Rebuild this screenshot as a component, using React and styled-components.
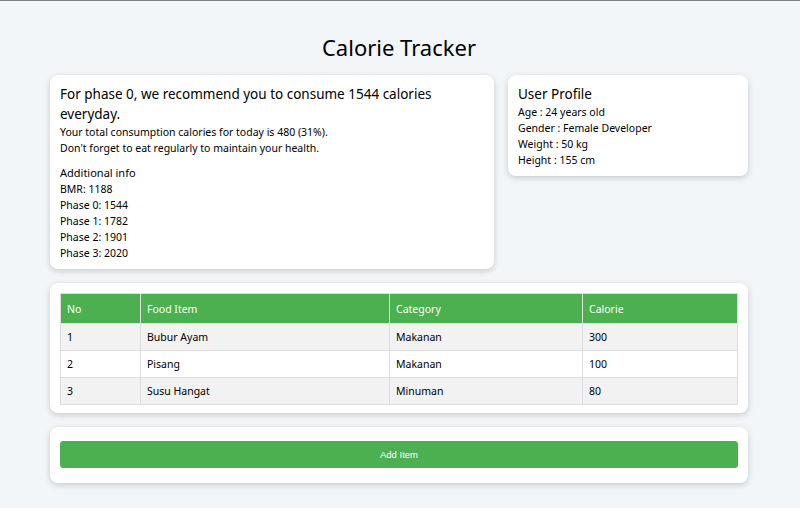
import React from "react";
import styled, { createGlobalStyle } from "styled-components";

const GlobalStyle = createGlobalStyle`
    html, body {
        margin: 0;
        padding: 0;
        background: #f3f6f9;
    }
    body {
        font-family: "Noto Sans", "Open Sans", sans-serif;
        color: #000;
        border-top: 1px solid #7d8186;
    }
`;

const foods = [
    { no: 1, name: "Bubur Ayam", category: "Makanan", calorie: 300 },
    { no: 2, name: "Pisang", category: "Makanan", calorie: 100 },
    { no: 3, name: "Susu Hangat", category: "Minuman", calorie: 80 },
];

const App = () => {
    return (
        <>
            <GlobalStyle />
            <Page>
                <Title>Calorie Tracker</Title>
                <TopRow>
                    <Card>
                        <Headline>For phase 0, we recommend you to consume 1544 calories everyday.</Headline>
                        <Line>Your total consumption calories for today is 480 (31%).</Line>
                        <Line>Don't forget to eat regularly to maintain your health.</Line>
                        <InfoBlock>
                            <InfoTitle>Additional info</InfoTitle>
                            <Line>BMR: 1188</Line>
                            <Line>Phase 0: 1544</Line>
                            <Line>Phase 1: 1782</Line>
                            <Line>Phase 2: 1901</Line>
                            <Line>Phase 3: 2020</Line>
                        </InfoBlock>
                    </Card>
                    <Card $side>
                        <Headline>User Profile</Headline>
                        <Line>Age : 24 years old</Line>
                        <Line>Gender : Female Developer</Line>
                        <Line>Weight : 50 kg</Line>
                        <Line>Height : 155 cm</Line>
                    </Card>
                </TopRow>
                <Card $pad="10px 10px 8px">
                    <Table>
                        <thead>
                            <tr>
                                <Th $w={80}>No</Th>
                                <Th $w={249}>Food Item</Th>
                                <Th $w={193}>Category</Th>
                                <Th>Calorie</Th>
                            </tr>
                        </thead>
                        <tbody>
                            {foods.map((f) => (
                                <Tr key={f.no} $odd={f.no % 2 === 1}>
                                    <Td>{f.no}</Td>
                                    <Td>{f.name}</Td>
                                    <Td>{f.category}</Td>
                                    <Td>{f.calorie}</Td>
                                </Tr>
                            ))}
                        </tbody>
                    </Table>
                </Card>
                <Card $pad="14px 10px 15px">
                    <AddButton>Add Item</AddButton>
                </Card>
            </Page>
        </>
    );
};

const Page = styled.main`
    width: 698px;
    margin: 0 auto;
    padding: 32px 2px 24px 0;
    display: flex;
    flex-direction: column;
    gap: 14px;
`;

const Title = styled.h1`
    margin: 0;
    height: 28px;
    font-size: 22px;
    line-height: 28px;
    font-weight: 400;
    text-align: center;
`;

const TopRow = styled.div`
    display: flex;
    align-items: flex-start;
    gap: 14px;
`;

const Card = styled.section`
    background: #fff;
    border-radius: 8px;
    box-shadow: 0 2px 6px rgba(0, 0, 0, 0.18);
    padding: ${(p) => p.$pad || "9px 10px 8px"};
    flex: ${(p) => (p.$side ? "0 0 240px" : "1")};
    box-sizing: border-box;
`;

const Headline = styled.h2`
    margin: 0;
    font-size: 13.5px;
    line-height: 20px;
    font-weight: 400;
`;

const Line = styled.p`
    margin: 0;
    font-size: 10.5px;
    line-height: 16px;
`;

const InfoBlock = styled.div`
    margin-top: 9px;
`;

const InfoTitle = styled.h3`
    margin: 0;
    font-size: 11px;
    line-height: 16px;
    font-weight: 400;
`;

const Table = styled.table`
    width: 100%;
    border-collapse: collapse;
    font-size: 10.5px;
`;

const Th = styled.th`
    width: ${(p) => (p.$w ? `${p.$w}px` : "auto")};
    height: 30px;
    padding: 0 6px;
    box-sizing: border-box;
    text-align: left;
    font-weight: 400;
    color: #fff;
    background: #4caf50;
    border: 1px solid #ddd;
`;

const Tr = styled.tr`
    background: ${(p) => (p.$odd ? "#f2f2f2" : "#fff")};
`;

const Td = styled.td`
    height: 27px;
    padding: 0 6px;
    box-sizing: border-box;
    border: 1px solid #ddd;
`;

const AddButton = styled.button`
    display: block;
    width: 100%;
    height: 27px;
    border: 1px solid #4caf50;
    border-radius: 3px;
    background: #4caf50;
    color: #fff;
    font-family: "Liberation Sans", Arial, sans-serif;
    font-size: 9.5px;
    cursor: pointer;
`;

export default App;
